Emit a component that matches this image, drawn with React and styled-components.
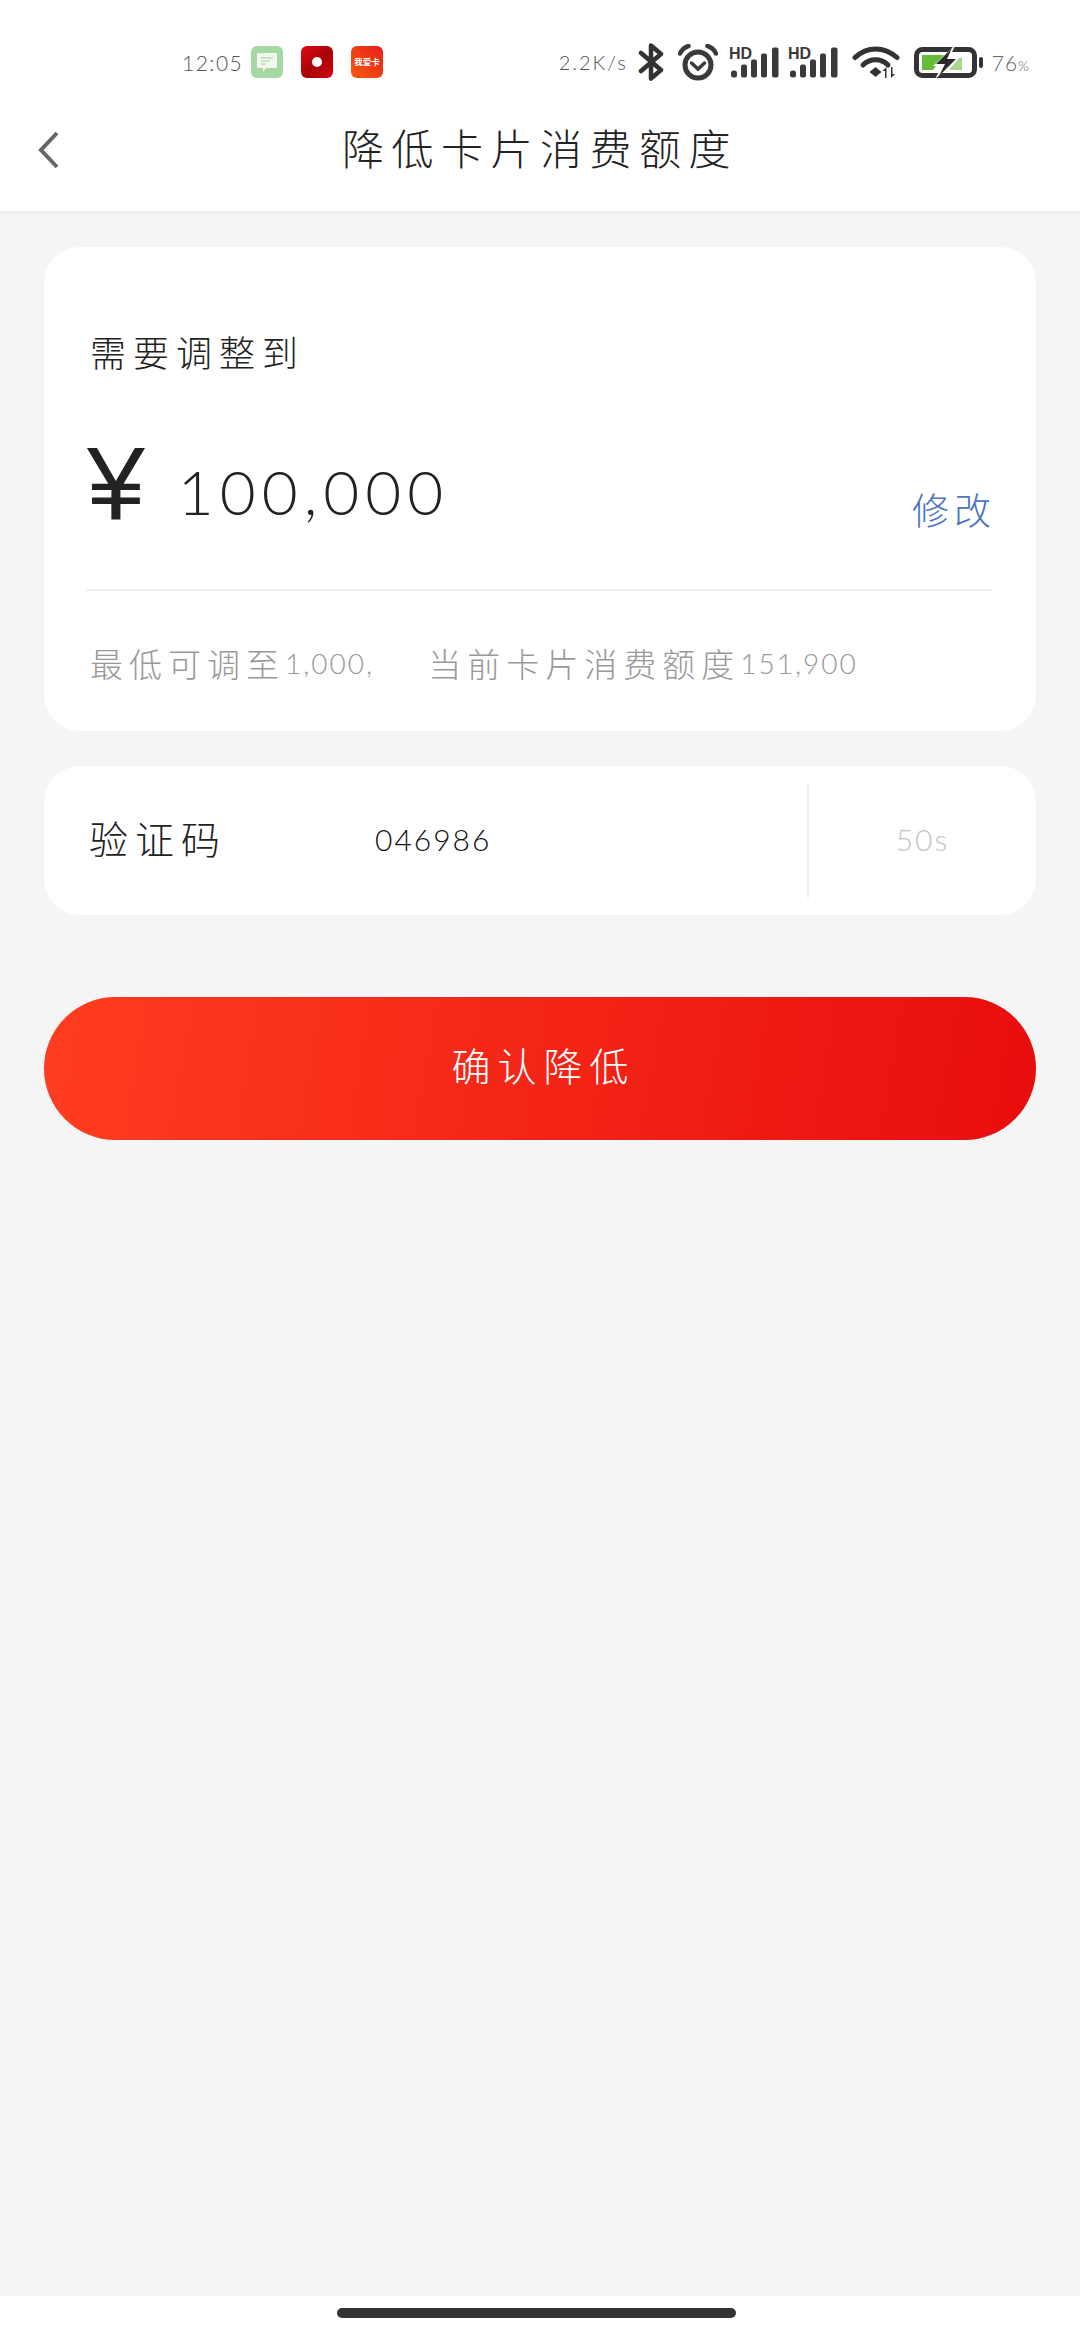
import React from 'react';
import styled, { createGlobalStyle } from 'styled-components';

const cjk = '"Noto Sans CJK SC", "Noto Sans", sans-serif';
const latin = 'Lato, "Noto Sans CJK SC", sans-serif';

const GlobalStyle = createGlobalStyle`
  * {
    box-sizing: border-box;
  }

  html, body {
    margin: 0;
    padding: 0;
    background: #f5f5f5;
  }
`;

const Page = styled.div`
  background: #f5f5f5;
  display: flex;
  flex-direction: column;
  height: 2340px;
  width: 1080px;
`;

const TopArea = styled.header`
  background: #fff;
  box-shadow: 0 2px 5px rgba(0, 0, 0, 0.06);
  height: 211px;
`;

const StatusBar = styled.div`
  align-items: center;
  display: flex;
  height: 94px;
  justify-content: space-between;
  padding: 30px 51px 0 182px;
`;

const StatusLeft = styled.div`
  align-items: center;
  display: flex;
  gap: 18px;
`;

const Clock = styled.span`
  color: #555;
  font-family: ${latin};
  font-size: 21px;
  font-weight: 300;
  letter-spacing: 1.5px;
  margin-right: -10px;
`;

const StatusRight = styled.div`
  align-items: center;
  display: flex;
`;

const Speed = styled.span`
  color: #555;
  font-family: ${latin};
  font-size: 20px;
  font-weight: 300;
  letter-spacing: 2px;
  margin-right: 10px;
`;

const Slot = styled.span`
  display: flex;
  margin-right: ${(props) => props.$gap}px;
`;

const Battery = styled.span`
  color: #666;
  font-family: ${latin};
  font-size: 21px;
  font-weight: 300;
  letter-spacing: 1px;

  small {
    font-size: 14px;
    letter-spacing: 0;
  }
`;

const NavBar = styled.div`
  align-items: center;
  display: flex;
  height: 117px;
  justify-content: center;
  padding-bottom: 11px;
  position: relative;
`;

const BackIcon = styled.svg`
  left: 36px;
  position: absolute;
  top: 36px;
`;

const Title = styled.h1`
  color: #222;
  font-family: ${cjk};
  font-size: 42px;
  font-weight: 300;
  letter-spacing: 7.5px;
  line-height: 50px;
  margin: 0;
`;

const Content = styled.main`
  display: flex;
  flex: 1;
  flex-direction: column;
  padding: 36px 44px 0;
`;

const Card = styled.section`
  background: #fff;
  border-radius: 36px;
`;

const AmountCard = styled(Card)`
  height: 484px;
  padding: 82px 43px 0 46px;
`;

const Label = styled.div`
  color: #222;
  font-family: ${cjk};
  font-size: 36px;
  font-weight: 300;
  letter-spacing: 7px;
  line-height: 44px;
`;

const AmountRow = styled.div`
  align-items: flex-end;
  border-bottom: 2px solid #efefef;
  display: flex;
  height: 218px;
  justify-content: space-between;
  margin-left: -4px;
  padding-bottom: 58px;
`;

const Amount = styled.div`
  align-items: flex-end;
  display: flex;
  gap: 33px;
  margin-bottom: 3px;
  padding-left: 1px;
`;

const Yen = styled.span`
  color: #222;
  font-family: "Liberation Sans", sans-serif;
  font-size: 104px;
  line-height: 90px;
`;

const Value = styled.span`
  color: #222;
  font-family: ${latin};
  font-size: 62px;
  font-weight: 300;
  letter-spacing: 6px;
  line-height: 74px;
`;

const EditLink = styled.a`
  color: #4a74c4;
  font-family: ${cjk};
  font-size: 37px;
  font-weight: 300;
  letter-spacing: 5px;
  line-height: 44px;
  margin-right: -3px;
`;

const Hint = styled.div`
  align-items: center;
  color: #999;
  display: flex;
  font-family: ${cjk};
  font-size: 33px;
  font-weight: 300;
  letter-spacing: 6px;
  line-height: 40px;
  margin-top: 52px;
`;

const HintNumber = styled.span`
  font-family: ${latin};
  font-size: 28px;
  font-weight: 300;
  letter-spacing: 2px;
  margin-right: ${(props) => props.$gap}px;
`;

const CodeCard = styled(Card)`
  align-items: center;
  display: flex;
  height: 149px;
  margin-top: 35px;
  padding-left: 45px;
`;

const CodeLabel = styled.span`
  color: #222;
  font-family: ${cjk};
  font-size: 39px;
  font-weight: 300;
  letter-spacing: 7px;
  padding-bottom: 8px;
  width: 286px;
`;

const CodeValue = styled.span`
  color: #111;
  flex: 1;
  font-family: ${latin};
  font-size: 30px;
  font-weight: 300;
  letter-spacing: 2px;
  padding-bottom: 4px;
`;

const Countdown = styled.div`
  align-items: center;
  border-left: 2px solid #eee;
  color: #c4c4c4;
  display: flex;
  font-family: ${latin};
  font-size: 30px;
  font-weight: 300;
  height: 115px;
  justify-content: center;
  letter-spacing: 2px;
  padding-bottom: 4px;
  width: 229px;
`;

const ConfirmButton = styled.button`
  background: linear-gradient(100deg, #ff3d20 0%, #e80d0d 100%);
  border: 0;
  border-radius: 72px;
  color: #fff;
  font-family: ${cjk};
  font-size: 39px;
  font-weight: 300;
  height: 143px;
  letter-spacing: 7px;
  margin-top: 82px;
  padding: 0 0 10px 7px;
`;

const HomeArea = styled.footer`
  align-items: center;
  background: #fff;
  display: flex;
  height: 44px;
  justify-content: center;
  padding-bottom: 10px;
`;

const HomeBar = styled.div`
  background: #333;
  border-radius: 5px;
  height: 10px;
  margin-left: -7px;
  width: 399px;
`;

const MessageIcon = () => (
  <svg width="32" height="32" viewBox="0 0 32 32">
    <rect width="32" height="32" rx="6" fill="#a5d9a3" />
    <path d="M7 7h18a1 1 0 0 1 1 1v13a1 1 0 0 1-1 1H15l-3 4v-4H7a1 1 0 0 1-1-1V8a1 1 0 0 1 1-1z" fill="#f2f8f0" />
    <path d="M10 12h12M10 15h9M10 18h5" stroke="#a5c9a3" strokeWidth="1" />
  </svg>
);

const RecordIcon = () => (
  <svg width="32" height="32" viewBox="0 0 32 32">
    <defs>
      <linearGradient id="recordFill" x1="0" y1="0" x2="1" y2="1">
        <stop offset="0" stopColor="#e00a14" />
        <stop offset="0.55" stopColor="#a80208" />
        <stop offset="1" stopColor="#d80610" />
      </linearGradient>
    </defs>
    <rect width="32" height="32" rx="6" fill="url(#recordFill)" />
    <circle cx="16" cy="16" r="5" fill="#fff" />
  </svg>
);

const CardAppIcon = () => (
  <svg width="32" height="32" viewBox="0 0 32 32">
    <defs>
      <linearGradient id="cardAppFill" x1="0" y1="1" x2="1" y2="0">
        <stop offset="0" stopColor="#f8590f" />
        <stop offset="1" stopColor="#e8201a" />
      </linearGradient>
    </defs>
    <rect width="32" height="32" rx="6" fill="url(#cardAppFill)" />
    <text x="16" y="18.5" textAnchor="middle" fontSize="8.5" fontWeight="700" fill="#fff" fontFamily={cjk}>我爱卡</text>
  </svg>
);

const BluetoothIcon = () => (
  <svg width="26" height="38" viewBox="0 0 26 38">
    <path d="M3 10l20 17-10 8.5V2.5L23 11 3 28" fill="none" stroke="#333" strokeWidth="4.5" strokeLinejoin="round" strokeLinecap="round" />
  </svg>
);

const AlarmIcon = () => (
  <svg width="40" height="37" viewBox="0 0 40 37">
    <circle cx="20" cy="21" r="13" fill="none" stroke="#3a3a3a" strokeWidth="5" />
    <path d="M13.5 19l6.500 6 6.500-6" fill="none" stroke="#3a3a3a" strokeWidth="3.5" strokeLinecap="round" />
    <path d="M2 9.500C4 5.500 7 3 10.500 2M38 9.500C36 5.500 33 3 29.500 2" fill="none" stroke="#3a3a3a" strokeWidth="4.5" strokeLinecap="round" />
  </svg>
);

const SignalIcon = () => (
  <svg width="50" height="36" viewBox="0 0 50 36">
    <text x="0" y="15" fontSize="16" fontWeight="700" fill="#3a3a3a" fontFamily={'"Liberation Sans", sans-serif'}>HD</text>
    <rect x="2" y="26.500" width="6" height="7" rx="2.500" fill="#3a3a3a" />
    <rect x="12" y="20.500" width="6" height="13" rx="2" fill="#3a3a3a" />
    <rect x="22" y="15.500" width="6" height="18" rx="2" fill="#3a3a3a" />
    <rect x="32" y="9.500" width="6" height="24" rx="2" fill="#3a3a3a" />
    <rect x="43" y="3.500" width="6.500" height="30" rx="2" fill="#3a3a3a" />
  </svg>
);

const WifiIcon = () => (
  <svg width="48" height="34" viewBox="0 0 48 34">
    <path d="M3 12.500C15 1 32 1 45 12.500" fill="none" stroke="#333" strokeWidth="5" strokeLinecap="round" />
    <path d="M11 20C18 13 29 13 36 20" fill="none" stroke="#333" strokeWidth="5" strokeLinecap="round" />
    <path d="M17.500 27l6-5 6 5-6 5z" fill="#333" />
    <path d="M33 33v-7h-2.500l4-4v11zM39 22v11l4-4h-2.500v-7z" fill="#333" />
  </svg>
);

const BatteryIcon = () => (
  <svg width="70" height="32" viewBox="0 0 70 32">
    <rect x="2.500" y="3.500" width="58" height="26" rx="6" fill="none" stroke="#333" strokeWidth="5" />
    <path d="M8 9h22L19 24H8z" fill="#66bb3a" />
    <path d="M45 12h3v12H35z" fill="#a8d88e" />
    <path d="M40 0L19 20h9l-7 13 24-21H35l6-12z" fill="#fff" />
    <path d="M38 2L22 18h9l-6 12 17-17h-9l5-11z" fill="#2c2c2c" />
    <rect x="65" y="11" width="4" height="11" rx="2" fill="#333" />
  </svg>
);

const App = function () {
  return (
    <Page>
      <GlobalStyle />
      <TopArea>
        <StatusBar>
          <StatusLeft>
            <Clock>12:05</Clock>
            <MessageIcon />
            <RecordIcon />
            <CardAppIcon />
          </StatusLeft>
          <StatusRight>
            <Speed>2.2K/s</Speed>
            <Slot $gap={14}><BluetoothIcon /></Slot>
            <Slot $gap={11}><AlarmIcon /></Slot>
            <Slot $gap={9}><SignalIcon /></Slot>
            <Slot $gap={14}><SignalIcon /></Slot>
            <Slot $gap={14}><WifiIcon /></Slot>
            <Slot $gap={8}><BatteryIcon /></Slot>
            <Battery>76<small>%</small></Battery>
          </StatusRight>
        </StatusBar>
        <NavBar>
          <BackIcon width="26" height="40" viewBox="0 0 26 40">
            <path d="M21 3L5 20l16 17" fill="none" stroke="#666" strokeWidth="4" />
          </BackIcon>
          <Title>降低卡片消费额度</Title>
        </NavBar>
      </TopArea>
      <Content>
        <AmountCard>
          <Label>需要调整到</Label>
          <AmountRow>
            <Amount>
              <Yen>¥</Yen>
              <Value>100,000</Value>
            </Amount>
            <EditLink>修改</EditLink>
          </AmountRow>
          <Hint>
            最低可调至
            <HintNumber $gap={54}>1,000,</HintNumber>
            当前卡片消费额度
            <HintNumber $gap={0}>151,900</HintNumber>
          </Hint>
        </AmountCard>
        <CodeCard>
          <CodeLabel>验证码</CodeLabel>
          <CodeValue>046986</CodeValue>
          <Countdown>50s</Countdown>
        </CodeCard>
        <ConfirmButton>确认降低</ConfirmButton>
      </Content>
      <HomeArea>
        <HomeBar />
      </HomeArea>
    </Page>
  );
};

export default App;
